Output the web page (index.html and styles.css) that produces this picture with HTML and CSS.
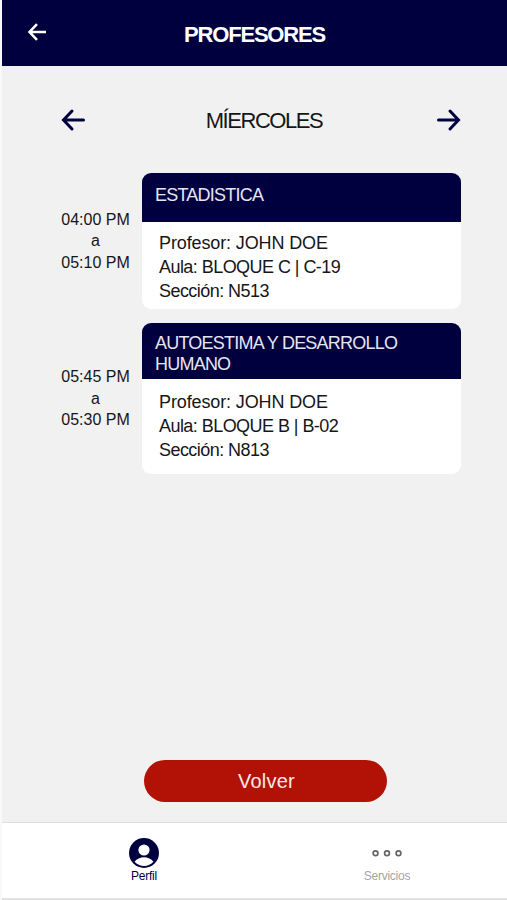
FILE: index.html
```
<!DOCTYPE html>
<html lang="es">
<head>
    <meta charset="UTF-8">
    <meta name="viewport" content="width=device-width, initial-scale=1.0">
    <title>Profesores</title>
    <link rel="stylesheet" href="styles.css">
</head>
<body>
    <div class="app">
        <header class="header">
            <button class="icon-btn back" aria-label="Regresar">
                <svg width="20" height="20" viewBox="0 0 20 20"><path d="M19 10H3M10 2.2L2.500 10l7.500 7.800"/></svg>
            </button>
            <h1>PROFESORES</h1>
        </header>

        <main class="content">
            <div class="day-nav">
                <button class="icon-btn" aria-label="Día anterior">
                    <svg width="24" height="24" viewBox="0 0 24 24"><path d="M22.500 12H3M11 3L2.500 12l8.500 9"/></svg>
                </button>
                <h2>MÍERCOLES</h2>
                <button class="icon-btn" aria-label="Día siguiente">
                    <svg width="24" height="24" viewBox="0 0 24 24"><path d="M1.500 12H21M13 3l8.500 9-8.500 9"/></svg>
                </button>
            </div>

            <div class="schedule">
                <div class="row">
                    <div class="time">
                        <span>04:00 PM</span>
                        <span>a</span>
                        <span>05:10 PM</span>
                    </div>
                    <div class="card">
                        <h3 class="card-title single">ESTADISTICA</h3>
                        <div class="card-body">
                            <p class="profesor">Profesor: JOHN DOE</p>
                            <p>Aula: BLOQUE C | C-19</p>
                            <p>Sección: N513</p>
                        </div>
                    </div>
                </div>

                <div class="row">
                    <div class="time">
                        <span>05:45 PM</span>
                        <span>a</span>
                        <span>05:30 PM</span>
                    </div>
                    <div class="card tall">
                        <h3 class="card-title">AUTOESTIMA Y DESARROLLO HUMANO</h3>
                        <div class="card-body">
                            <p class="profesor">Profesor: JOHN DOE</p>
                            <p>Aula: BLOQUE B | B-02</p>
                            <p>Sección: N813</p>
                        </div>
                    </div>
                </div>
            </div>

            <button class="volver">Volver</button>
        </main>

        <nav class="tabs">
            <a class="tab active">
                <svg width="30" height="30" viewBox="0 0 30 30">
                    <circle cx="15" cy="15" r="15" fill="#01003f"/>
                    <circle cx="15" cy="12" r="5.6" fill="#fff"/>
                    <path d="M5.5 23.8C7.8 20.8 11.300 19.300 15 19.300s7.200 1.500 9.500 4.500C22 26.500 18.800 28 15 28s-7-1.500-9.500-4.200z" fill="#fff"/>
                </svg>
                <span>Perfil</span>
            </a>
            <a class="tab">
                <svg width="30" height="30" viewBox="0 0 30 30" fill="none" stroke="#666" stroke-width="1.700">
                    <circle cx="3.500" cy="15.200" r="2.400"/>
                    <circle cx="15" cy="15.200" r="2.400"/>
                    <circle cx="26.500" cy="15.200" r="2.400"/>
                </svg>
                <span>Servicios</span>
            </a>
        </nav>
    </div>
</body>
</html>
```
FILE: styles.css
```
* {
    box-sizing: border-box;
    margin: 0;
    padding: 0;
}

body {
    font-family: "Liberation Sans", Arial, sans-serif;
    background: #f9f9f9;
    color: #161616;
}

.app {
    display: flex;
    flex-direction: column;
    height: 900px;
    margin-left: 2px;
    background: #f1f1f1;
    border-bottom: 2px solid #e2e2e2;
}

button {
    border: none;
    background: none;
    font-family: inherit;
    cursor: pointer;
}

.icon-btn {
    display: flex;
}

.icon-btn svg {
    fill: none;
    stroke: #01003f;
    stroke-width: 3;
    stroke-linecap: round;
}

.header {
    display: grid;
    grid-template-columns: 50px 1fr 50px;
    height: 66px;
    padding-top: 22px;
    background: #01003f;
    color: #fff;
}

.header h1 {
    font-size: 22px;
    line-height: 26px;
    letter-spacing: -1.2px;
    text-align: center;
}

.back {
    padding-left: 25px;
}

.back svg {
    stroke: #fff;
    stroke-width: 2.5;
    stroke-linecap: butt;
}

.content {
    flex: 1;
    display: flex;
    flex-direction: column;
    padding: 41px 46px 20px 59px;
}

.day-nav {
    display: flex;
    justify-content: space-between;
    align-items: center;
    height: 26px;
}

.day-nav h2 {
    padding: 1px 0 0 6px;
    font-size: 22px;
    font-weight: normal;
    letter-spacing: -1.45px;
}

.schedule {
    display: flex;
    flex-direction: column;
    gap: 14px;
    margin-top: 39.5px;
}

.row {
    display: flex;
    align-items: center;
}

.time {
    display: flex;
    flex-direction: column;
    width: 81px;
    padding: 1px 12px 0 0;
    font-size: 16px;
    line-height: 21.6px;
    text-align: center;
    white-space: nowrap;
}

.card {
    flex: 1;
    height: 136px;
    border-radius: 9px;
    background: #fff;
    overflow: hidden;
}

.card.tall {
    height: 151px;
}

.card-title {
    height: 56.5px;
    padding: 10px 40px 0 13px;
    background: #01003f;
    color: #e6e6f2;
    font-size: 18px;
    font-weight: normal;
    line-height: 21.5px;
    letter-spacing: -0.78px;
}

.card-title.single {
    height: 49px;
    padding-top: 12px;
}

.card-body {
    padding: 9px 17px;
    font-size: 18px;
    line-height: 24px;
    letter-spacing: -0.55px;
}

.tall .card-body {
    padding-top: 10.5px;
}

.profesor {
    letter-spacing: -0.12px;
}

.volver {
    align-self: center;
    width: 243px;
    height: 42px;
    margin: auto 0 0 9px;
    padding: 1px 0 0 2px;
    border-radius: 21px;
    background: #b11205;
    color: #fbe9e6;
    font-size: 20px;
    letter-spacing: 0.2px;
}

.tabs {
    display: grid;
    grid-template-columns: 243px 243px;
    height: 76px;
    padding: 15px 0 0 20.5px;
    border-top: 1px solid #dedede;
    background: #fff;
}

.tab {
    display: flex;
    flex-direction: column;
    align-items: center;
    gap: 1px;
    color: #a5a5a5;
    font-size: 12px;
    line-height: 14px;
    letter-spacing: -0.25px;
}

.tab.active {
    color: #01003f;
}
```
